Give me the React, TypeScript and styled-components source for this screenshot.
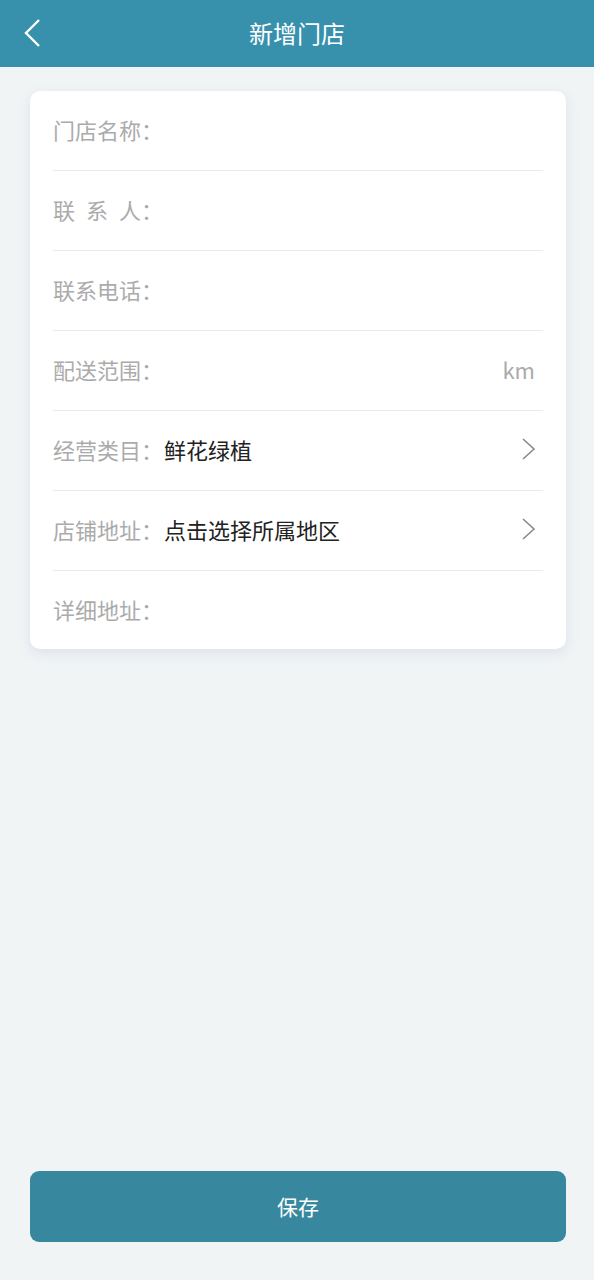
import React from 'react';
import styled, { createGlobalStyle } from 'styled-components';

const GlobalStyle = createGlobalStyle`
  html, body {
    margin: 0;
    padding: 0;
    background: #f0f4f5;
  }
  body {
    font-family: "Noto Sans CJK SC", "Noto Sans", sans-serif;
  }
  * {
    box-sizing: border-box;
  }
`;

const Page = styled.div`
  min-height: 100vh;
  display: flex;
  flex-direction: column;
  background: #f0f4f5;
`;

const Header = styled.div`
  height: 67px;
  background: #3791ad;
  display: flex;
  align-items: center;
  justify-content: center;
  position: relative;
  color: #fff;
  font-size: 24px;
  padding-bottom: 2px;
`;

const BackButton = styled.div`
  position: absolute;
  left: 22px;
  top: 18px;
  width: 22px;
  height: 30px;
  display: flex;
  align-items: center;
`;

const Card = styled.div`
  margin: 24px 28px 0 30px;
  background: #fff;
  border-radius: 10px;
  padding: 0 23px;
  box-shadow: 0 4px 12px rgba(200, 205, 225, 0.45);
`;

const Row = styled.div<{ $last?: boolean }>`
  height: ${(p) => (p.$last ? 78 : 80)}px;
  display: flex;
  align-items: center;
  padding-bottom: 3px;
  border-bottom: ${(p) => (p.$last ? 'none' : '1px solid #e8eaed')};
  font-size: 22px;
`;

const Label = styled.div`
  display: flex;
  color: #ababab;
  flex-shrink: 0;
`;

const LabelText = styled.span`
  width: 88px;
  text-align: justify;
  text-align-last: justify;
`;

const Colon = styled.span`
  width: 23px;
`;

const Value = styled.div`
  flex: 1;
  color: #222;
`;

const Unit = styled.div`
  color: #ababab;
  margin-right: 8px;
`;

const Arrow = styled.div`
  width: 16px;
  height: 24px;
  margin-right: 6px;
  display: flex;
  align-items: center;
`;

const Footer = styled.div`
  margin-top: auto;
  padding: 0 28px 38px 30px;
`;

const SaveButton = styled.div`
  height: 71px;
  border-radius: 9px;
  background: #37889f;
  color: #fff;
  font-size: 21px;
  display: flex;
  align-items: center;
  justify-content: center;
  padding-bottom: 2px;
`;

interface Field {
  label: string;
  value?: string;
  unit?: string;
  arrow?: boolean;
}

const fields: Field[] = [
  { label: '门店名称' },
  { label: '联系人' },
  { label: '联系电话' },
  { label: '配送范围', unit: 'km' },
  { label: '经营类目', value: '鲜花绿植', arrow: true },
  { label: '店铺地址', value: '点击选择所属地区', arrow: true },
  { label: '详细地址' },
];

const ChevronRight = () => (
  <svg width="16" height="24" viewBox="0 0 16 24" fill="none">
    <path d="M2 2 L13 12 L2 22" stroke="#8a8a8a" strokeWidth="1.6" strokeLinejoin="miter" />
  </svg>
);

const ChevronLeft = () => (
  <svg width="20" height="30" viewBox="0 0 20 30" fill="none">
    <path d="M17 2 L4 15 L17 28" stroke="#fff" strokeWidth="2.4" />
  </svg>
);

export default function App() {
  return (
    <Page>
      <GlobalStyle />
      <Header>
        <BackButton>
          <ChevronLeft />
        </BackButton>
        新增门店
      </Header>
      <Card>
        {fields.map((f, index) => (
          <Row key={index} $last={index === fields.length - 1}>
            <Label>
              <LabelText>{f.label}</LabelText>
              <Colon>：</Colon>
            </Label>
            <Value>{f.value}</Value>
            {f.unit && <Unit>{f.unit}</Unit>}
            {f.arrow && (
              <Arrow>
                <ChevronRight />
              </Arrow>
            )}
          </Row>
        ))}
      </Card>
      <Footer>
        <SaveButton>保存</SaveButton>
      </Footer>
    </Page>
  );
}
